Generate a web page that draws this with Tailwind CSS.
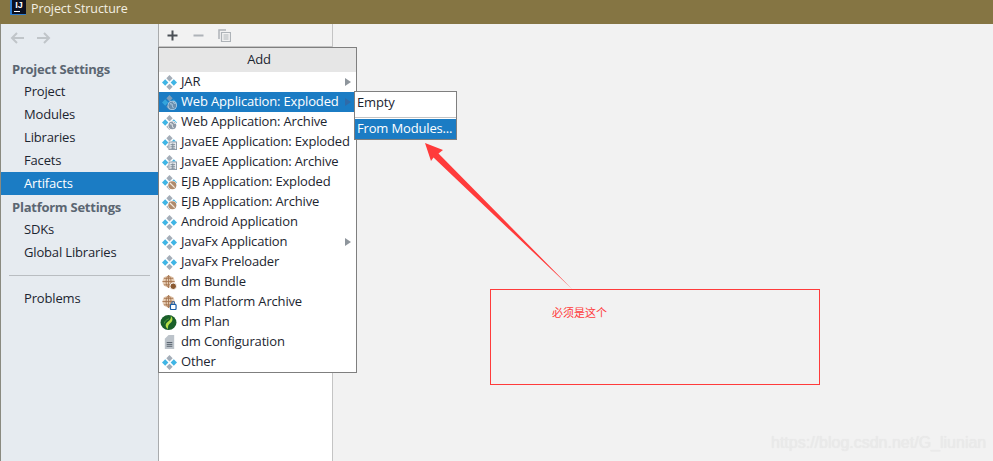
<!DOCTYPE html>
<html lang="en">
<head>
    <meta charset="UTF-8">
    <title>Project Structure</title>
    <script src="https://cdn.jsdelivr.net/npm/@tailwindcss/browser@4"></script>
</head>
<body class="relative w-[993px] h-[461px] overflow-hidden bg-[#f2f2f2] text-[13px] tracking-[-0.16px] text-[#1c2530] font-['Open_Sans',sans-serif]">
    <svg class="hidden">
        <symbol id="mod" viewBox="0 0 16 16">
            <path d="M8 0l3.4 3.4L8 6.8 4.600 3.400z" fill="#a3adb8"/>
            <path d="M3.400 4.600L6.800 8l-3.400 3.400L0 8z" fill="#3fb5e5"/>
            <path d="M12.600 4.600L16 8l-3.400 3.400L9.200 8z" fill="#3fb5e5"/>
            <path d="M8 9.200l3.400 3.400L8 16l-3.400-3.400z" fill="#a3adb8"/>
        </symbol>
        <symbol id="web" viewBox="0 0 16 16">
            <use href="#mod"/>
            <circle cx="11" cy="11" r="5" fill="#fff"/>
            <circle cx="11" cy="11" r="4.200" fill="#8d98a5"/>
            <path d="M8.500 9.500c1.500-.5 3 .5 2.500 1.500s1 1.500 1 3M12 7.500c0 1 1 1.500 2.500 1.500" fill="none" stroke="#fff" stroke-width="1"/>
        </symbol>
        <symbol id="ee" viewBox="0 0 16 16">
            <use href="#mod"/>
            <rect x="7" y="7" width="9" height="9" fill="#fff"/>
            <rect x="7.500" y="7.500" width="8" height="8" fill="#eef1f4" stroke="#8d98a5"/>
            <path d="M9 10h5M9 12h5M9 14h5M11.500 9v6" stroke="#7b8794" stroke-width="1"/>
        </symbol>
        <symbol id="ejb" viewBox="0 0 16 16">
            <use href="#mod"/>
            <circle cx="11" cy="11" r="5" fill="#fff"/>
            <circle cx="11" cy="11" r="4.300" fill="#b08a6b"/>
            <path d="M8.500 8.500l5 5" stroke="#f2e7dc" stroke-width="1.300"/>
        </symbol>
        <symbol id="globe" viewBox="0 0 16 16">
            <circle cx="7" cy="7" r="6.500" fill="#e6cdb4"/>
            <path d="M7 .5v13M.5 7h13M2 3.500h10M2 10.500h10" stroke="#a5744f" stroke-width="1"/>
            <path d="M7 .5C3.500 3 3.500 11 7 13.500M7 .5c3.500 2.500 3.500 10.500 0 13" fill="none" stroke="#a5744f" stroke-width="1"/>
        </symbol>
    </svg>

    <!-- Title bar -->
    <div class="h-6 bg-[#857543] flex items-start pl-[10px]">
        <div class="relative w-[16px] h-[15px] bg-[#0b1020] border-l-2 border-b border-[#2f7fd0] text-white text-[9px] leading-[10px] font-bold text-center tracking-normal font-['Liberation_Sans',sans-serif]">IJ<span class="absolute left-[2px] bottom-[2px] w-[6px] h-px bg-white"></span></div>
        <span class="ml-[5px] text-[#f3efe2] text-[12.5px] tracking-[-0.1px] leading-[17px]">Project Structure</span>
    </div>

    <div class="flex h-[437px] border-l border-[#8a8a80]">
        <!-- Sidebar -->
        <div class="w-[158px] shrink-0 bg-[#e6ebf0] border-r border-[#a9abad]">
            <div class="h-[28px] flex items-center gap-[13px] pl-[9px] text-[#c0c5c9]">
                <svg class="w-[14px] h-[12px]" viewBox="0 0 14 12" fill="none" stroke="currentColor" stroke-width="2"><path d="M14 6H2M7 1L2 6l5 5"/></svg>
                <svg class="w-[14px] h-[12px]" viewBox="0 0 14 12" fill="none" stroke="currentColor" stroke-width="2"><path d="M0 6h12M7 1l5 5-5 5"/></svg>
            </div>
            <div class="h-[23px] mt-[5px] pt-[2px] pl-[11px] flex items-center font-bold tracking-[-0.25px] text-[#5b6672]">Project Settings</div>
            <div class="h-[23px] pl-[23px] flex items-center">Project</div>
            <div class="h-[23px] pl-[23px] flex items-center">Modules</div>
            <div class="h-[23px] pl-[23px] flex items-center">Libraries</div>
            <div class="h-[23px] pl-[23px] flex items-center">Facets</div>
            <div class="h-[23px] pl-[23px] flex items-center bg-[#1b7cc4] text-white">Artifacts</div>
            <div class="h-[23px] pt-[2px] pl-[11px] flex items-center font-bold tracking-[-0.25px] text-[#5b6672]">Platform Settings</div>
            <div class="h-[23px] pl-[23px] flex items-center">SDKs</div>
            <div class="h-[23px] pl-[23px] flex items-center">Global Libraries</div>
            <div class="mt-[11px] mb-[11px] mx-[8px] h-px bg-[#b9bdc1]"></div>
            <div class="h-[23px] pl-[23px] flex items-center">Problems</div>
        </div>

        <!-- Artifact list -->
        <div class="w-[174px] shrink-0 bg-white border-r border-[#c4c4c4]">
            <div class="h-[23px] bg-[#f2f2f2] border-b border-[#c4c4c4] flex items-center pl-[7px] gap-[13px]">
                <svg class="w-[13px] h-[13px] text-[#4a4f55]" viewBox="0 0 13 13" fill="none" stroke="currentColor" stroke-width="2"><path d="M6.500 1.500v10M1.500 6.500h10"/></svg>
                <svg class="w-[13px] h-[13px] text-[#aeb3b8]" viewBox="0 0 13 13" fill="none" stroke="currentColor" stroke-width="2"><path d="M1.500 6.500h10"/></svg>
                <svg class="w-[13px] h-[13px] text-[#aeb3b8]" viewBox="0 0 13 13" fill="none" stroke="currentColor" stroke-width="1.500"><path d="M1 10V1h7"/><path d="M3.500 3.500h9v9h-9zM5.500 6h5M5.500 8h5M5.500 10h5" stroke-width="1.200"/></svg>
            </div>
        </div>

        <div class="flex-1"></div>
    </div>

    <!-- Add popup -->
    <div class="absolute left-[158px] top-[47px] w-[199px] h-[326px] bg-white border border-[#7f7f7f]">
        <div class="h-6 pl-[3px] bg-[#e6e6e6] flex items-center justify-center">Add</div>
        <div class="h-5 flex items-center"><svg class="w-[15px] h-[15px] ml-[3px] mr-[4px]"><use href="#mod"/></svg><span class="flex-1">JAR</span><span class="mr-[5px] border-y-[4px] border-l-[6px] border-y-transparent border-l-[#8e959c]"></span></div>
        <div class="h-5 flex items-center bg-[#1b7cc4] text-white"><svg class="w-[15px] h-[15px] ml-[3px] mr-[4px] opacity-70"><use href="#web"/></svg><span class="flex-1">Web Application: Exploded</span><span class="mr-[5px] border-y-[4px] border-l-[6px] border-y-transparent border-l-[#2f6aa8]"></span></div>
        <div class="h-5 flex items-center"><svg class="w-[15px] h-[15px] ml-[3px] mr-[4px]"><use href="#web"/></svg>Web Application: Archive</div>
        <div class="h-5 flex items-center"><svg class="w-[15px] h-[15px] ml-[3px] mr-[4px]"><use href="#ee"/></svg>JavaEE Application: Exploded</div>
        <div class="h-5 flex items-center"><svg class="w-[15px] h-[15px] ml-[3px] mr-[4px]"><use href="#ee"/></svg>JavaEE Application: Archive</div>
        <div class="h-5 flex items-center"><svg class="w-[15px] h-[15px] ml-[3px] mr-[4px]"><use href="#ejb"/></svg>EJB Application: Exploded</div>
        <div class="h-5 flex items-center"><svg class="w-[15px] h-[15px] ml-[3px] mr-[4px]"><use href="#ejb"/></svg>EJB Application: Archive</div>
        <div class="h-5 flex items-center"><svg class="w-[15px] h-[15px] ml-[3px] mr-[4px]"><use href="#mod"/></svg>Android Application</div>
        <div class="h-5 flex items-center"><svg class="w-[15px] h-[15px] ml-[3px] mr-[4px]"><use href="#mod"/></svg><span class="flex-1">JavaFx Application</span><span class="mr-[5px] border-y-[4px] border-l-[6px] border-y-transparent border-l-[#8e959c]"></span></div>
        <div class="h-5 flex items-center"><svg class="w-[15px] h-[15px] ml-[3px] mr-[4px]"><use href="#mod"/></svg>JavaFx Preloader</div>
        <div class="h-5 flex items-center">
            <svg class="w-[15px] h-[15px] ml-[3px] mr-[4px]" viewBox="0 0 16 16"><use href="#globe"/><circle cx="12" cy="12" r="3.500" fill="#8a5a32" stroke="#fff"/></svg>dm Bundle
        </div>
        <div class="h-5 flex items-center">
            <svg class="w-[15px] h-[15px] ml-[3px] mr-[4px]" viewBox="0 0 16 16"><use href="#globe"/><rect x="9" y="10" width="6" height="5.500" rx="1" fill="#fff" stroke="#1d5fa8" stroke-width="1.300"/><path d="M10.500 10V8.500a1.500 1.500 0 013 0V10" fill="none" stroke="#1d5fa8"/></svg>dm Platform Archive
        </div>
        <div class="h-5 flex items-center">
            <svg class="w-[17px] h-[15px] ml-px mr-[4px]" viewBox="0 0 17 16"><ellipse cx="8.500" cy="8" rx="8.500" ry="8" fill="#1a5f2a"/><path d="M11 1c3 3 1.500 6-.5 7.500S7.500 12 8 15C4.500 12.500 5 9.500 7.500 7.500S11.500 4 11 1z" fill="#b7e04a"/><path d="M9 4c-3 1-5 3-5 5" fill="none" stroke="#4c9a35"/></svg>dm Plan
        </div>
        <div class="h-5 flex items-center">
            <svg class="w-[15px] h-[15px] ml-[3px] mr-[4px]" viewBox="0 0 16 16"><path d="M3 15V4l4-4h6v15z" fill="#bcc3ca"/><path d="M5 8h6M5 10h6M5 12h6" stroke="#55606b"/></svg>dm Configuration
        </div>
        <div class="h-5 flex items-center"><svg class="w-[15px] h-[15px] ml-[3px] mr-[4px]"><use href="#mod"/></svg>Other</div>
    </div>

    <!-- Submenu -->
    <div class="absolute left-[354px] top-[91px] w-[103px] h-[49px] bg-white border border-[#7f7f7f]">
        <div class="h-[21px] pl-[2px] flex items-center">Empty</div>
        <div class="mt-[4px] mb-px h-px bg-[#c4c4c4]"></div>
        <div class="h-[20px] pl-[2px] flex items-center bg-[#1b7cc4] text-white">From Modules...</div>
    </div>

    <!-- Annotation -->
    <svg class="absolute left-0 top-0 w-[993px] h-[461px] pointer-events-none" viewBox="0 0 993 461">
        <path d="M425 143L443 150 438.500 153.500 572 289 433.500 157.500 431 161z" fill="#ff3b3b"/>
    </svg>
    <div class="absolute left-[490px] top-[289px] w-[330px] h-[96px] border border-[#ff3b3b]">
        <span class="absolute left-[61px] top-[15px] text-[11px] leading-[14px] tracking-normal text-[#ff3b3b] font-['Noto_Sans_CJK_SC',sans-serif]">必须是这个</span>
    </div>

    <div class="absolute left-[771px] top-[434px] text-[16px] leading-[18px] tracking-normal text-[#eaeaea] [text-shadow:0_0_1px_#e2e2e2] font-['Liberation_Sans',sans-serif]">https://blog.csdn.net/G_liunian</div>
</body>
</html>
